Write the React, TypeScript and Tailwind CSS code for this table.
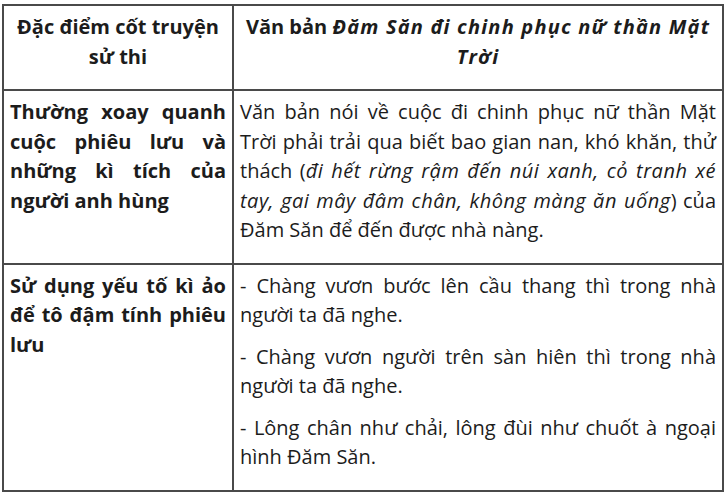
const rows = [
  {
    left: 'Thường xoay quanh cuộc phiêu lưu và những kì tích của người anh hùng',
    right: [
      <>
        Văn bản nói về cuộc đi chinh phục nữ thần Mặt Trời phải trải qua biết bao gian nan, khó khăn, thử thách (
        <em className="tracking-[0.025em]">
          đi hết rừng rậm đến núi xanh, cỏ tranh xé tay, gai mây đâm chân, không màng ăn uống
        </em>
        ) của Đăm Săn để đến được nhà nàng.
      </>,
    ],
  },
  {
    left: 'Sử dụng yếu tố kì ảo để tô đậm tính phiêu lưu',
    right: [
      <>- Chàng vươn bước lên cầu thang thì trong nhà người ta đã nghe.</>,
      <>- Chàng vươn người trên sàn hiên thì trong nhà người ta đã nghe.</>,
      <>- Lông chân như chải, lông đùi như chuốt à ngoại hình Đăm Săn.</>,
    ],
  },
];

export default function App() {
  return (
    <div className="w-[727px] h-[496px] bg-white pl-[2px] pt-[4px] font-['Open_Sans',sans-serif] text-[20px] leading-[29.5px] text-[#1c1c1c]">
      <table className="w-[722px] border-collapse table-fixed">
        <colgroup>
          <col className="w-[230px]" />
          <col />
        </colgroup>
        <thead>
          <tr>
            <th className="border-2 border-[#4a4a4a] px-[6px] pt-[6px] pb-[6px] align-top font-bold text-center">
              <p className="mb-[12px]">Đặc điểm cốt truyện sử thi</p>
            </th>
            <th className="border-2 border-[#4a4a4a] px-[6px] pt-[6px] pb-[6px] align-top font-bold text-center">
              <p className="mb-[12px]">
                Văn bản <em className="tracking-[0.06em]">Đăm Săn đi chinh phục nữ thần Mặt Trời</em>
              </p>
            </th>
          </tr>
        </thead>
        <tbody>
          {rows.map((row) => (
            <tr key={row.left}>
              <td className="border-2 border-[#4a4a4a] px-[6px] pt-[6px] pb-[6px] align-top font-bold text-justify">
                <p className="mb-[12px]">{row.left}</p>
              </td>
              <td className="border-2 border-[#4a4a4a] px-[6px] pt-[6px] pb-[6px] align-top text-justify">
                {row.right.map((p, i) => (
                  <p key={i} className="mb-[12px]">
                    {p}
                  </p>
                ))}
              </td>
            </tr>
          ))}
        </tbody>
      </table>
    </div>
  );
}
